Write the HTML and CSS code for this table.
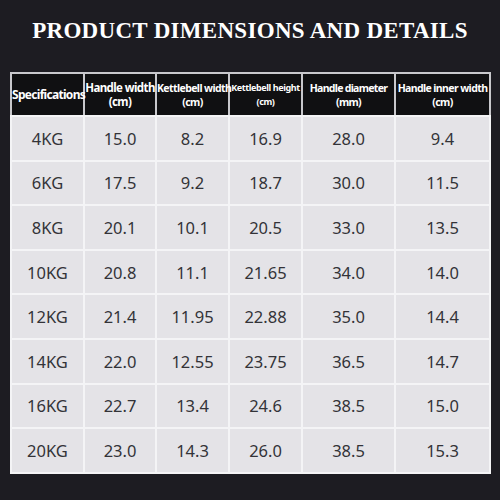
FILE: index.html
```html
<!doctype html>
<html>
<head>
  <meta charset="utf-8">
  <meta name="viewport" content="width=device-width, initial-scale=1">
  <title>Product Dimensions and Details</title>
  <link rel="stylesheet" href="styles.css">
</head>
<body>

  <h1 class="title">PRODUCT DIMENSIONS AND DETAILS</h1>

  <table class="specs">
    <colgroup>
      <col class="c1"><col class="c2"><col class="c3"><col class="c4"><col class="c5"><col class="c6">
    </colgroup>
    <thead>
      <tr>
        <th class="h-spec">Specifications</th>
        <th class="h-hw">Handle width<br>(cm)</th>
        <th class="h-kw">Kettlebell width<br>(cm)</th>
        <th class="h-kh">Kettlebell height<br>(cm)</th>
        <th class="h-hd">Handle diameter<br>(mm)</th>
        <th class="h-hi">Handle inner width<br>(cm)</th>
      </tr>
    </thead>
    <tbody>
      <tr><td>4KG</td><td>15.0</td><td>8.2</td><td>16.9</td><td>28.0</td><td>9.4</td></tr>
      <tr><td>6KG</td><td>17.5</td><td>9.2</td><td>18.7</td><td>30.0</td><td>11.5</td></tr>
      <tr><td>8KG</td><td>20.1</td><td>10.1</td><td>20.5</td><td>33.0</td><td>13.5</td></tr>
      <tr><td>10KG</td><td>20.8</td><td>11.1</td><td>21.65</td><td>34.0</td><td>14.0</td></tr>
      <tr><td>12KG</td><td>21.4</td><td>11.95</td><td>22.88</td><td>35.0</td><td>14.4</td></tr>
      <tr><td>14KG</td><td>22.0</td><td>12.55</td><td>23.75</td><td>36.5</td><td>14.7</td></tr>
      <tr><td>16KG</td><td>22.7</td><td>13.4</td><td>24.6</td><td>38.5</td><td>15.0</td></tr>
      <tr><td>20KG</td><td>23.0</td><td>14.3</td><td>26.0</td><td>38.5</td><td>15.3</td></tr>
    </tbody>
  </table>

</body>
</html>
```

FILE: styles.css
```css
html, body {
  margin: 0;
  height: 100%;
}

body {
  background: #1d1c22;
  padding: 20px 10px 0;
  box-sizing: border-box;
}

.title {
  margin: 0 0 30px;
  font-family: "Liberation Serif", "Times New Roman", serif;
  font-weight: bold;
  font-size: 23px;
  line-height: 22px;
  color: #fff;
  text-align: center;
  letter-spacing: 0.3px;
}

.specs {
  width: 480px;
  table-layout: fixed;
  border-collapse: collapse;
  border: 1px solid #d8d8dc;
  background: #e4e3e7;
}

.c1 { width: 73px; }
.c2 { width: 72px; }
.c3 { width: 73px; }
.c4 { width: 73px; }
.c5 { width: 93px; }
.c6 { width: 95px; }

.specs th,
.specs td {
  border: 2px solid #f4f4f6;
  padding: 0;
  text-align: center;
  vertical-align: middle;
  white-space: nowrap;
}

.specs th {
  height: 41px;
  background: #101012;
  color: #fff;
  font-family: "Noto Sans", sans-serif;
  font-weight: bold;
  line-height: 14px;
  border-color: #c8c8cc;
  border-bottom-color: #f4f4f6;
}

.specs th.h-spec { font-size: 12px;   letter-spacing: -0.7px; }
.specs th.h-hw   { font-size: 11.5px; letter-spacing: -0.6px; }
.specs th.h-kw   { font-size: 10.5px; letter-spacing: -0.6px; }
.specs th.h-kh   { font-size: 9px;    letter-spacing: -0.4px; }
.specs th.h-hd   { font-size: 10.5px; letter-spacing: -0.7px; }
.specs th.h-hi   { font-size: 10.5px; letter-spacing: -0.6px; }

.specs td {
  height: 42.6px;
  font-family: "Noto Sans", sans-serif;
  font-size: 16.5px;
  color: #333338;
}
```
